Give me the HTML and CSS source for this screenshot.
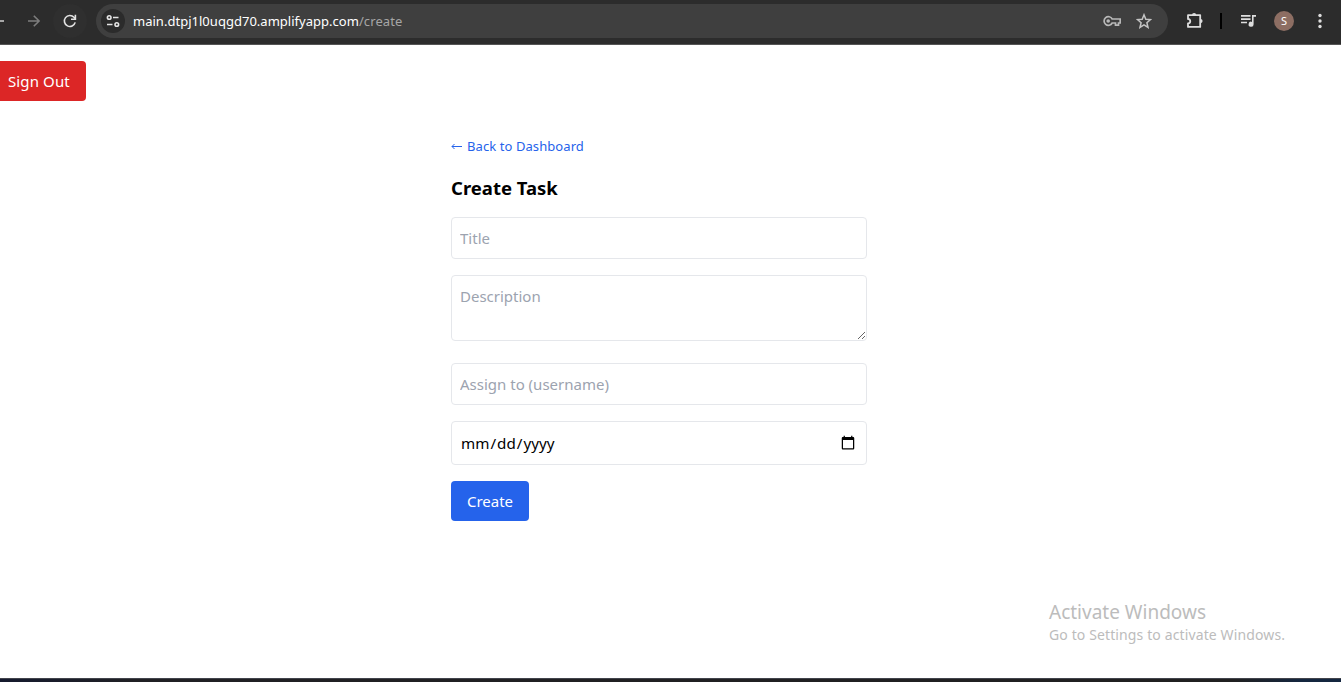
FILE: index.html
```html
<!DOCTYPE html>
<html lang="en">
<head>
<meta charset="utf-8">
<title>Create Task</title>
<link rel="stylesheet" href="styles.css">
</head>
<body>
<header class="toolbar">
  <svg class="back" width="4" height="16" viewBox="0 0 4 16"><path d="M0 8h4" stroke="#c7c7c7" stroke-width="1.6"/></svg>
  <svg class="forward" width="14" height="14" viewBox="0 0 14 14" fill="none" stroke="#7d7d7d" stroke-width="1.6"><path d="M1 7h11M6.8 1.7 12.1 7l-5.3 5.3"/></svg>
  <span class="reload"><svg width="14" height="14" viewBox="0 0 14 14"><path d="M12.2 8.4A5.500 5.500 0 1 1 11 3.300L12.500 5" fill="none" stroke="#e3e3e3" stroke-width="1.6"/><path d="M13.200 .8v5.200H8V4.500h3.600V.8z" fill="#e3e3e3"/></svg></span>
  <div class="address">
    <span class="site"><svg width="14" height="14" viewBox="0 0 14 14" fill="none" stroke="#e3e3e3" stroke-width="1.6"><circle cx="3.200" cy="3.500" r="1.8"/><path d="M7 3.500h5.500M1 10.500h5.500"/><circle cx="10.800" cy="10.500" r="1.8"/></svg></span>
    <span class="url"><span class="host">main.dtpj1l0uqgd70.amplifyapp.com</span><span class="path">/create</span></span>
    <svg class="key" width="18" height="12" viewBox="0 0 18 12" fill="none" stroke="#b8b8b8" stroke-width="1.7"><path d="M9.200 4A4.300 4.300 0 1 0 9.200 8H12.500V10.200H15.500V8H17.200V4Z"/><circle cx="5.200" cy="6" r="1.800" fill="#b8b8b8" stroke="none"/></svg>
    <svg class="star" width="16" height="16" viewBox="0 0 16 16" fill="none" stroke="#c4c4c4" stroke-width="1.500"><path d="m8 1.800 1.800 4.400 4.700.4-3.600 3.100 1.100 4.600L8 11.800l-4 2.500 1.100-4.600L1.500 6.600l4.700-.4z"/></svg>
  </div>
  <svg class="puzzle" width="18" height="18" viewBox="0 0 18 18"><path d="M2 3.200H14.200V14.900H2V11.300C5 11.300 5 7 2 7Z" fill="none" stroke="#dedede" stroke-width="1.800" stroke-linejoin="round"/><path d="M6 3a2.100 2.100 0 0 1 4.200 0zM14.500 7a2.100 2.100 0 0 1 0 4.200z" fill="#dedede"/></svg>
  <span class="divider"></span>
  <svg class="media" width="16" height="14" viewBox="0 0 16 14"><path d="M0 1.900h9.500M0 5.200h9.500M0 8.500h6" fill="none" stroke="#dedede" stroke-width="1.700"/><path d="M11 1H15V2.800H12.600V10.200A2.500 2.500 0 1 1 11 7.900Z" fill="#dedede"/></svg>
  <span class="avatar">S</span>
  <svg class="more" width="4" height="16" viewBox="0 0 4 16" fill="#dedede"><circle cx="2" cy="2.500" r="1.700"/><circle cx="2" cy="8" r="1.700"/><circle cx="2" cy="13.500" r="1.700"/></svg>
</header>
<main class="page">
  <button class="sign-out">Sign Out</button>
  <section class="task">
    <a class="back-link"><svg width="11" height="8" viewBox="0 0 11 8" fill="none" stroke="currentColor"><path d="M1 4.500h10M3.500 2l-2.500 2.500 2.500 2.500"/></svg><span>Back to Dashboard</span></a>
    <h1>Create Task</h1>
    <form class="form">
      <input class="field" type="text" placeholder="Title">
      <textarea class="field description" placeholder="Description"></textarea>
      <input class="field" type="text" placeholder="Assign to (username)">
      <input class="field date" type="date">
      <button class="create" type="button">Create</button>
    </form>
  </section>
  <aside class="activation">
    <p class="activation-title">Activate Windows</p>
    <p class="activation-text">Go to Settings to activate Windows.</p>
  </aside>
</main>
<footer class="taskbar"></footer>
</body>
</html>
```

FILE: styles.css
```css
* { box-sizing: border-box; }
body {
  margin: 0;
  height: 682px;
  overflow: hidden;
  display: flex;
  flex-direction: column;
  background: #fff;
  color: #000;
  font-family: "Noto Sans", "Open Sans", sans-serif;
  font-size: 15px;
}
svg { display: block; flex: none; }
.toolbar {
  flex: none;
  height: 45px;
  padding-bottom: 3px;
  display: flex;
  align-items: center;
  background: #2c2c2c;
  border-bottom: 1px solid #555;
}
.forward { margin-left: 23px; }
.reload {
  width: 34px;
  height: 34px;
  margin-left: 12px;
  border-radius: 50%;
  background: #2f2f2f;
  display: grid;
  place-items: center;
}
.address {
  width: 1072px;
  height: 34px;
  margin-left: 9px;
  padding-left: 5px;
  border-radius: 17px;
  background: #3f3f3f;
  display: flex;
  align-items: center;
}
.site {
  width: 24px;
  height: 24px;
  border-radius: 50%;
  background: #2b2b2b;
  display: grid;
  place-items: center;
}
.url {
  width: 970px;
  margin-left: 8px;
  font-size: 13px;
  line-height: 18px;
  white-space: nowrap;
}
.host { color: #fff; letter-spacing: 0.02px; }
.path { color: #a6a6a6; letter-spacing: 0.1px; }
.star { margin-left: 15px; }
.puzzle { margin-left: 18px; }
.divider { width: 2px; height: 16px; margin-left: 16px; background: #000; }
.media { margin-left: 19px; }
.avatar {
  width: 20px;
  height: 20px;
  margin-left: 17px;
  border-radius: 50%;
  background: #8d6e63;
  color: #fff;
  font-size: 11px;
  line-height: 20px;
  text-align: center;
}
.more { margin-left: 24px; }
.page { flex: 1; display: flex; flex-direction: column; align-items: flex-start; }
button { border: 0; border-radius: 4px; height: 40px; color: #fff; font: 15px/24px "Noto Sans", sans-serif; }
.sign-out {
  width: 86px;
  margin-top: 16px;
  padding: 0 0 0 8px;
  border-radius: 0 4px 4px 0;
  background: #dc2626;
  text-align: left;
  white-space: nowrap;
  letter-spacing: 0.12px;
}
.task { width: 416px; margin: 35px 0 0 451px; }
.back-link {
  height: 20px;
  display: flex;
  align-items: center;
  gap: 5px;
  color: #2563eb;
  font-size: 13px;
  line-height: 20px;
  letter-spacing: 0.08px;
}
h1 { margin: 18px 0 15px; font-size: 18.5px; line-height: 28px; font-weight: 700; }
.form { display: flex; flex-direction: column; align-items: flex-start; }
.field {
  display: block;
  width: 416px;
  height: 42px;
  margin: 0 0 16px;
  padding: 8px;
  border: 1px solid #e5e7eb;
  border-radius: 4px;
  background: #fff;
  color: #000;
  font: 15px/24px "Noto Sans", sans-serif;
}
.field::placeholder { color: #9ca3af; opacity: 1; }
.description { height: 66px; margin-bottom: 22px; resize: vertical; }
.date { height: 44px; font-size: 15.2px; }
.date::-webkit-calendar-picker-indicator { width: 16px; height: 16px; }
.create { width: 78px; padding: 0; background: #2563eb; }
.activation { margin: 78px 0 0 1049px; color: #bcbcbc; white-space: nowrap; }
.activation p { margin: 0; }
.activation-title { font-size: 19px; line-height: 27px; }
.activation-text { margin-top: -1px; font-size: 14px; line-height: 20px; letter-spacing: 0.12px; }
.activation .activation-text { margin-top: -1px; }
.taskbar {
  flex: none;
  height: 4px;
  border-top: 1px solid #42444c;
  background: linear-gradient(90deg, #151a2e 0, #202024 10%, #202020 92%, #14263f 97%, #14263f);
}
```
